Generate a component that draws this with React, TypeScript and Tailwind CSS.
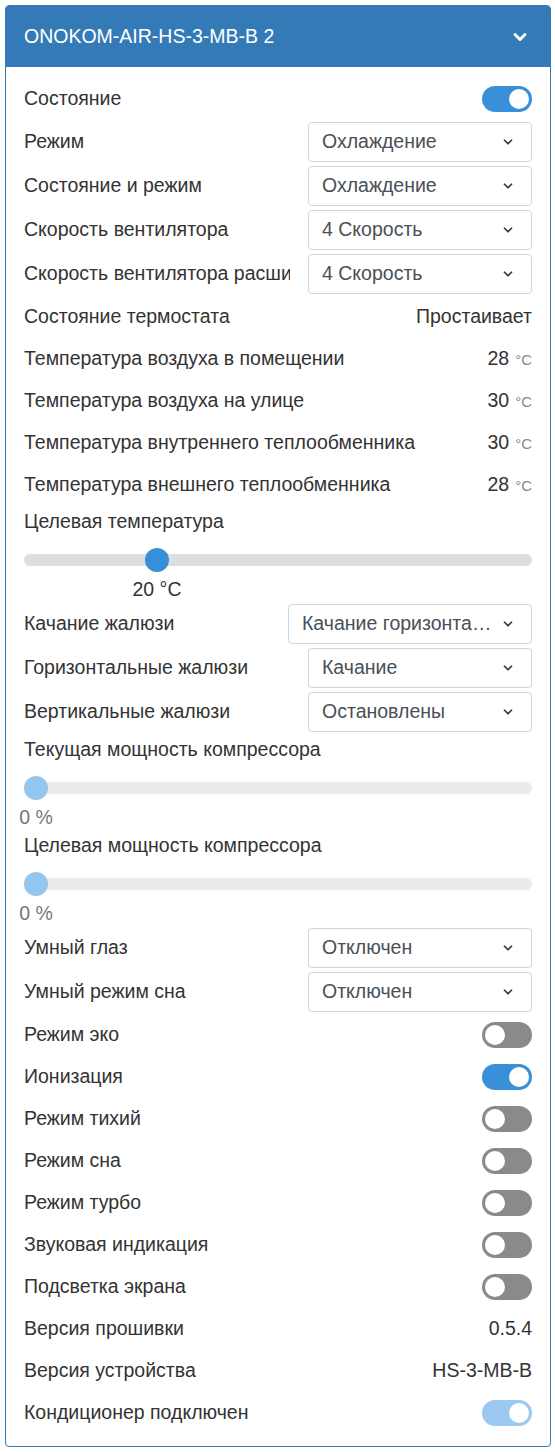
import { ChevronDown } from 'lucide-react';

type Row =
  | { kind: 'toggle'; label: string; on: boolean; disabled?: boolean }
  | { kind: 'select'; label: string; value: string; wide?: boolean }
  | { kind: 'text'; label: string; value: string; unit?: string }
  | { kind: 'slider'; label: string; pct: number; value: string; disabled?: boolean };

const rows: Row[] = [
  { kind: 'toggle', label: 'Состояние', on: true },
  { kind: 'select', label: 'Режим', value: 'Охлаждение' },
  { kind: 'select', label: 'Состояние и режим', value: 'Охлаждение' },
  { kind: 'select', label: 'Скорость вентилятора', value: '4 Скорость' },
  { kind: 'select', label: 'Скорость вентилятора расширенная', value: '4 Скорость' },
  { kind: 'text', label: 'Состояние термостата', value: 'Простаивает' },
  { kind: 'text', label: 'Температура воздуха в помещении', value: '28', unit: '°C' },
  { kind: 'text', label: 'Температура воздуха на улице', value: '30', unit: '°C' },
  { kind: 'text', label: 'Температура внутреннего теплообменника', value: '30', unit: '°C' },
  { kind: 'text', label: 'Температура внешнего теплообменника', value: '28', unit: '°C' },
  { kind: 'slider', label: 'Целевая температура', pct: 25, value: '20 °C' },
  { kind: 'select', label: 'Качание жалюзи', value: 'Качание горизонтально', wide: true },
  { kind: 'select', label: 'Горизонтальные жалюзи', value: 'Качание' },
  { kind: 'select', label: 'Вертикальные жалюзи', value: 'Остановлены' },
  { kind: 'slider', label: 'Текущая мощность компрессора', pct: 0, value: '0 %', disabled: true },
  { kind: 'slider', label: 'Целевая мощность компрессора', pct: 0, value: '0 %', disabled: true },
  { kind: 'select', label: 'Умный глаз', value: 'Отключен' },
  { kind: 'select', label: 'Умный режим сна', value: 'Отключен' },
  { kind: 'toggle', label: 'Режим эко', on: false },
  { kind: 'toggle', label: 'Ионизация', on: true },
  { kind: 'toggle', label: 'Режим тихий', on: false },
  { kind: 'toggle', label: 'Режим сна', on: false },
  { kind: 'toggle', label: 'Режим турбо', on: false },
  { kind: 'toggle', label: 'Звуковая индикация', on: false },
  { kind: 'toggle', label: 'Подсветка экрана', on: false },
  { kind: 'text', label: 'Версия прошивки', value: '0.5.4' },
  { kind: 'text', label: 'Версия устройства', value: 'HS-3-MB-B' },
  { kind: 'toggle', label: 'Кондиционер подключен', on: true, disabled: true },
];

function Toggle({ on, disabled }: { on: boolean; disabled?: boolean }) {
  const track = on ? (disabled ? 'bg-[#9bc9ef]' : 'bg-[#3a8fd9]') : 'bg-[#8a8a8a]';
  return (
    <div className={`w-[50px] h-[26px] rounded-full flex items-center px-[3px] ${track} ${on ? 'justify-end' : 'justify-start'}`}>
      <div className="w-[20px] h-[20px] rounded-full bg-white" />
    </div>
  );
}

function Select({ value, wide }: { value: string; wide?: boolean }) {
  return (
    <div className={`${wide ? 'w-[244px]' : 'w-[224px]'} h-[40px] shrink-0 border border-[#ced4da] rounded-[4px] bg-white flex items-center pl-[13px] pr-[16px] gap-[8px] text-[#495057]`}>
      <span className="flex-1 truncate">{value}</span>
      <ChevronDown className="w-[14px] h-[14px] text-[#343a40] shrink-0" strokeWidth={3} />
    </div>
  );
}

function Slider({ label, pct, value, disabled }: { label: string; pct: number; value: string; disabled?: boolean }) {
  return (
    <div className="flex flex-col">
      <div className="h-[32px] flex items-center">{label}</div>
      <div className="h-[44px] flex items-center">
        <div className={`relative w-full h-[12px] rounded-full ${disabled ? 'bg-[#ebebeb]' : 'bg-[#dcdfe2]'}`}>
          <div
            className={`absolute top-1/2 -translate-y-1/2 -translate-x-1/2 w-[24px] h-[24px] rounded-full ${disabled ? 'bg-[#95c7ee]' : 'bg-[#358fd9]'}`}
            style={{ left: `calc(12px + (100% - 24px) * ${pct / 100})` }}
          />
        </div>
      </div>
      <div className="relative h-[20px]">
        <span
          className={`absolute -top-[7px] -translate-x-1/2 whitespace-nowrap ${disabled ? 'text-[#777]' : 'text-[#333]'}`}
          style={{ left: `calc(12px + (100% - 24px) * ${pct / 100})` }}
        >
          {value}
        </span>
      </div>
    </div>
  );
}

export default function App() {
  return (
    <div className="w-[555px] min-h-[1452px] bg-white p-[5px] pr-[4px] text-[19.5px] text-[#333]" style={{ fontFamily: '"Liberation Sans", Arial, sans-serif' }}>
      <div className="border border-[#337ab7] rounded-[4px] overflow-hidden">
        {/* Header */}
        <div className="h-[61px] bg-[#337ab7] text-white flex items-center justify-between pl-[18px] pr-[20px]">
          <span>ONOKOM-AIR-HS-3-MB-B 2</span>
          <ChevronDown className="w-[20px] h-[20px]" strokeWidth={3.5} />
        </div>

        {/* Body */}
        <div className="pt-[11px] pb-[12px] pl-[18px] pr-[18px] flex flex-col">
          {rows.map((row, i) => {
            if (row.kind === 'slider') return <Slider key={i} {...row} />;
            if (row.kind === 'select')
              return (
                <div key={i} className="h-[44px] flex items-center gap-[18px]">
                  <span className="flex-1 min-w-0 overflow-hidden whitespace-nowrap">{row.label}</span>
                  <Select value={row.value} wide={row.wide} />
                </div>
              );
            if (row.kind === 'toggle')
              return (
                <div key={i} className="h-[42px] flex items-center justify-between">
                  <span>{row.label}</span>
                  <Toggle on={row.on} disabled={row.disabled} />
                </div>
              );
            return (
              <div key={i} className="h-[42px] flex items-center justify-between">
                <span className="whitespace-nowrap">{row.label}</span>
                <span className="whitespace-nowrap">
                  {row.value}
                  {row.unit && <span className="text-[15px] text-[#888] ml-[6px]">{row.unit}</span>}
                </span>
              </div>
            );
          })}
        </div>
      </div>
    </div>
  );
}
